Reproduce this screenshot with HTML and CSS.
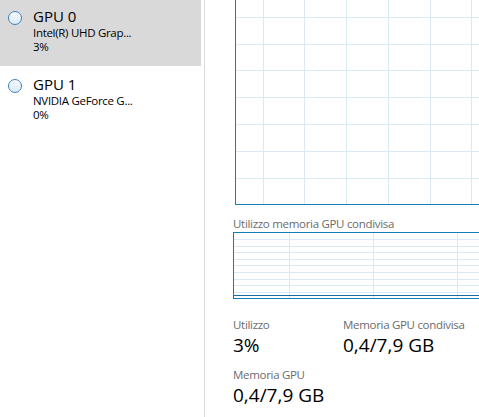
FILE: index.html
```html
<!DOCTYPE html>
<html lang="it">
<head>
<meta charset="utf-8">
<title>GPU</title>
<link rel="stylesheet" href="styles.css">
</head>
<body>
<div class="app">
  <aside class="sidebar">
    <div class="item selected">
      <span class="radio"></span>
      <div class="info">
        <div class="name">GPU 0</div>
        <div class="sub">Intel(R) UHD Grap...</div>
        <div class="sub">3%</div>
      </div>
    </div>
    <div class="item">
      <span class="radio"></span>
      <div class="info">
        <div class="name">GPU 1</div>
        <div class="sub">NVIDIA GeForce G...</div>
        <div class="sub">0%</div>
      </div>
    </div>
  </aside>
  <main class="main">
    <div class="chart chart-big">
      <svg class="grid" width="300" height="213" viewBox="0 0 300 213">
        <g stroke="#d9eaf4" stroke-width="1">
          <line x1="0" y1="26.5" x2="300" y2="26.5"/>
          <line x1="0" y1="53.5" x2="300" y2="53.5"/>
          <line x1="0" y1="79.5" x2="300" y2="79.5"/>
          <line x1="0" y1="106.5" x2="300" y2="106.5"/>
          <line x1="0" y1="133.5" x2="300" y2="133.5"/>
          <line x1="0" y1="160.5" x2="300" y2="160.5"/>
          <line x1="0" y1="187.5" x2="300" y2="187.5"/>
          <line x1="27.5" y1="0" x2="27.5" y2="213"/>
          <line x1="68.5" y1="0" x2="68.5" y2="213"/>
          <line x1="110.5" y1="0" x2="110.5" y2="213"/>
          <line x1="152.5" y1="0" x2="152.5" y2="213"/>
          <line x1="194.5" y1="0" x2="194.5" y2="213"/>
          <line x1="235.5" y1="0" x2="235.5" y2="213"/>
        </g>
      </svg>
    </div>
    <div class="chart-label">Utilizzo memoria GPU condivisa</div>
    <div class="chart chart-small">
      <svg class="grid" width="300" height="65" viewBox="0 0 300 65">
        <g stroke="#d9eaf4" stroke-width="1">
          <line x1="0" y1="6.5" x2="300" y2="6.5"/>
          <line x1="0" y1="13.5" x2="300" y2="13.5"/>
          <line x1="0" y1="19.5" x2="300" y2="19.5"/>
          <line x1="0" y1="26.5" x2="300" y2="26.5"/>
          <line x1="0" y1="32.5" x2="300" y2="32.5"/>
          <line x1="0" y1="39.5" x2="300" y2="39.5"/>
          <line x1="0" y1="46.5" x2="300" y2="46.5"/>
          <line x1="0" y1="52.5" x2="300" y2="52.5"/>
          <line x1="0" y1="59.5" x2="300" y2="59.5"/>
          <line x1="55.5" y1="0" x2="55.5" y2="65"/>
          <line x1="139.5" y1="0" x2="139.5" y2="65"/>
          <line x1="223.5" y1="0" x2="223.5" y2="65"/>
        </g>
        <path d="M167 62.5 L175 62 L188 62 L190 62.5 Z" fill="#a9cce6"/>
        <path d="M0 62.5 H300" stroke="#1a6aa8" stroke-width="1" fill="none"/>
      </svg>
    </div>
    <div class="stats">
      <div class="stat">
        <div class="stat-label">Utilizzo</div>
        <div class="stat-value">3%</div>
      </div>
      <div class="stat">
        <div class="stat-label">Memoria GPU condivisa</div>
        <div class="stat-value">0,4/7,9 GB</div>
      </div>
      <div class="stat">
        <div class="stat-label">Memoria GPU</div>
        <div class="stat-value">0,4/7,9 GB</div>
      </div>
    </div>
  </main>
</div>
</body>
</html>
```
FILE: styles.css
```css
html, body {
  margin: 0;
  padding: 0;
  background: #ffffff;
  overflow: hidden;
}
body {
  font-family: "Open Sans", "Noto Sans", sans-serif;
  color: #000000;
}
.app {
  display: flex;
  width: 479px;
  height: 417px;
  overflow: hidden;
}
.sidebar {
  flex: none;
  width: 204px;
  border-right: 1px solid #dadada;
}
.item {
  width: 201px;
  height: 66px;
  margin-bottom: 2px;
  display: flex;
  align-items: flex-start;
  box-sizing: border-box;
}
.item.selected {
  background: #d9d9d9;
}
.radio {
  flex: none;
  width: 12px;
  height: 12px;
  margin: 11px 0 0 8px;
  border: 1px solid #3f82bd;
  border-radius: 50%;
  background: linear-gradient(#f7fbfe, #dbe9f5);
}
.info {
  margin-left: 11px;
  padding-top: 6px;
}
.name {
  font-size: 15px;
  line-height: 20px;
}
.sub {
  font-size: 11.5px;
  line-height: 14px;
  letter-spacing: -0.3px;
}
.main {
  flex: 1;
  min-width: 0;
  padding-left: 28px;
  overflow: hidden;
}
.chart {
  border: 1px solid #117dbb;
  border-right: none;
  overflow: hidden;
}
.chart .grid {
  display: block;
}
.chart-big {
  margin: -10px 0 0 2px;
  height: 213px;
}
.chart-label {
  margin-top: 11px;
  font-size: 11.5px;
  line-height: 15px;
  letter-spacing: -0.3px;
  color: #6b6b6b;
  height: 13px;
}
.chart-small {
  margin-top: 3px;
  height: 65px;
}
.stats {
  display: grid;
  grid-template-columns: 110px auto;
  row-gap: 9px;
  margin-top: 18px;
}
.stat-label {
  font-size: 11.5px;
  line-height: 15px;
  letter-spacing: -0.3px;
  color: #6b6b6b;
  white-space: nowrap;
}
.stat-value {
  font-size: 19px;
  line-height: 26px;
}
```
